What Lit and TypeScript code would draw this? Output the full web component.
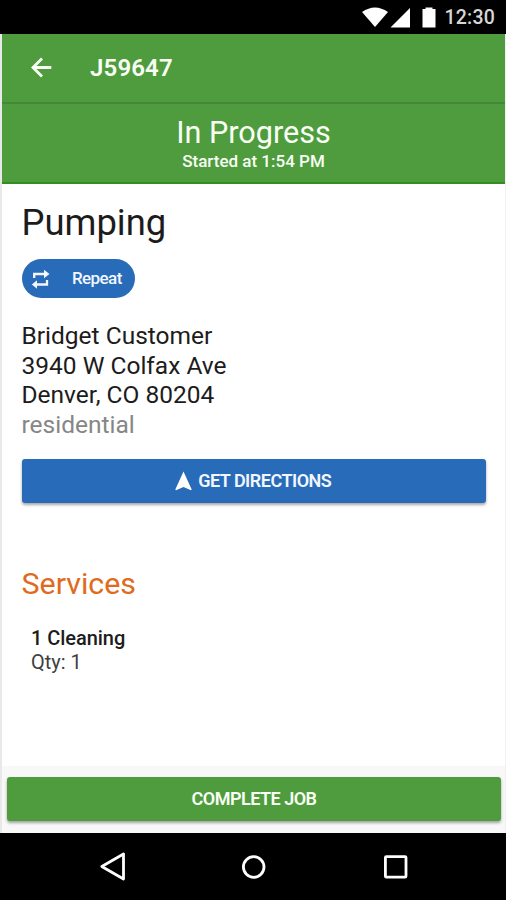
import { LitElement, html, css } from "lit";
import { customElement } from "lit/decorators.js";

@customElement("app-root")
export class AppRoot extends LitElement {
  static styles = css`
    :host { display: flex; flex-direction: column; width: 506px; height: 900px; background: #000; font-family: Roboto, "Liberation Sans", sans-serif; color: #1c1c1c; overflow: hidden; }
    * { box-sizing: border-box; }
    svg { display: block; flex: none; }
    .status { height: 34px; flex: none; display: flex; justify-content: flex-end; padding-right: 11px; color: #d6d6d6; }
    .clock { font-size: 19.5px; line-height: 35px; letter-spacing: 0.2px; font-weight: 500; margin-left: 8px; }
    .page { height: 799px; flex: none; display: flex; flex-direction: column; background: #fff; border-left: 2px solid #e9e9e9; border-right: 1px solid #f1f1f1; }
    .toolbar { height: 70px; flex: none; background: #4e9c3d; display: flex; align-items: center; padding: 0 0 3px 27px; border-bottom: 2px solid #45883a; color: #fafff5; }
    .job { font-size: 24px; font-weight: 600; letter-spacing: 0.15px; margin-left: 36px; line-height: 28px; padding-top: 2px; }
    .banner { height: 80px; flex: none; background: #4e9c3d; border-bottom: 2px solid #348d20; color: #fafff5; text-align: center; padding-top: 11px; }
    .state { font-size: 30.6px; line-height: 36px; }
    .since { font-size: 17px; line-height: 20px; font-weight: 500; }
    .content { flex: 1; padding: 0 19px 0 19.5px; }
    .title { font-size: 36.4px; line-height: 42px; margin-top: 18px; }
    .chip { width: 113px; height: 39px; border-radius: 20px; background: #286bb9; color: #f2f7ff; display: flex; align-items: center; padding-left: 9.5px; margin-top: 15px; font-size: 17px; font-weight: 500; letter-spacing: -0.6px; }
    .chip-label { margin-left: 21px; padding-bottom: 1px; }
    .address { margin-top: 23px; font-size: 24.5px; line-height: 29.7px; }
    .muted { color: #868686; }
    .button { display: flex; align-items: center; justify-content: center; height: 44px; border-radius: 3px; font-size: 18px; font-weight: 600; letter-spacing: -0.5px; box-shadow: 0 2px 3px rgba(0,0,0,.35); }
    .blue { background: #286bb9; color: #f2f7ff; margin-top: 19px; padding-right: 1px; }
    .button-label { margin-left: 6px; }
    .services { color: #de6b20; font-size: 30.4px; line-height: 36px; margin-top: 63px; }
    .item { margin: 24px 0 0 9.5px; line-height: 24px; font-size: 20px; }
    .name { font-weight: 500; letter-spacing: -0.05px; }
    .qty { color: #3f3f3f; }
    .footer { height: 67px; flex: none; background: #f8f8f8; padding: 11px 4px 0 5px; }
    .green { background: #4e9c3d; color: #fafff5; padding-bottom: 2px; }
    .nav { height: 67px; flex: none; }
  `;

  render() {
    return html`
      <div class="status">
        <svg width="76" height="34" viewBox="0 0 76 34" fill="#fff">
          <path d="M1 12Q14 3 27 12L14 27Z" />
          <path d="M49 8V27.5H29.5Z" />
          <path d="M61.5 9H64.5V7.5H71.5V9H74.5V27.5H61.5Z" />
        </svg>
        <span class="clock">12:30</span>
      </div>
      <div class="page">
        <div class="toolbar">
          <svg width="25" height="24" viewBox="0 0 25 24" fill="none" stroke="#fafff5" stroke-width="2.8">
            <path d="M22.3 12.5H4M13 3.5L4 12.5L13 21.5" />
          </svg>
          <span class="job">J59647</span>
        </div>
        <div class="banner">
          <div class="state">In Progress</div>
          <div class="since">Started at 1:54 PM</div>
        </div>
        <div class="content">
          <div class="title">Pumping</div>
          <div class="chip">
            <svg width="20" height="20" viewBox="0 0 20 20">
              <path d="M3.2 9V5H14M16 11V15.5H5" fill="none" stroke="#f2f7ff" stroke-width="2.3" />
              <path d="M13 .8L18.5 5L13 9.2ZM6 11.3L.8 15.5L6 19.7Z" fill="#f2f7ff" />
            </svg>
            <span class="chip-label">Repeat</span>
          </div>
          <div class="address">
            <div>Bridget Customer</div>
            <div>3940 W Colfax Ave</div>
            <div>Denver, CO 80204</div>
            <div class="muted">residential</div>
          </div>
          <div class="button blue">
            <svg width="17" height="20" viewBox="0 0 17 20"><path d="M8.5 0.5L16.7 18.5L16 19.2L8.5 16L1 19.2L.3 18.5Z" fill="#fff" /></svg>
            <span class="button-label">GET DIRECTIONS</span>
          </div>
          <div class="services">Services</div>
          <div class="item">
            <div class="name">1 Cleaning</div>
            <div class="qty">Qty: 1</div>
          </div>
        </div>
        <div class="footer"><div class="button green">COMPLETE JOB</div></div>
      </div>
      <svg class="nav" width="506" height="67" viewBox="0 0 506 67" fill="none" stroke="#fff" stroke-width="2.8" stroke-linejoin="round">
        <path d="M101.8 33.5L123.5 21V46Z" />
        <circle cx="253.7" cy="34" r="10.3" />
        <rect x="385.4" y="23.6" width="20.6" height="20.6" rx="1" />
      </svg>
    `;
  }
}
